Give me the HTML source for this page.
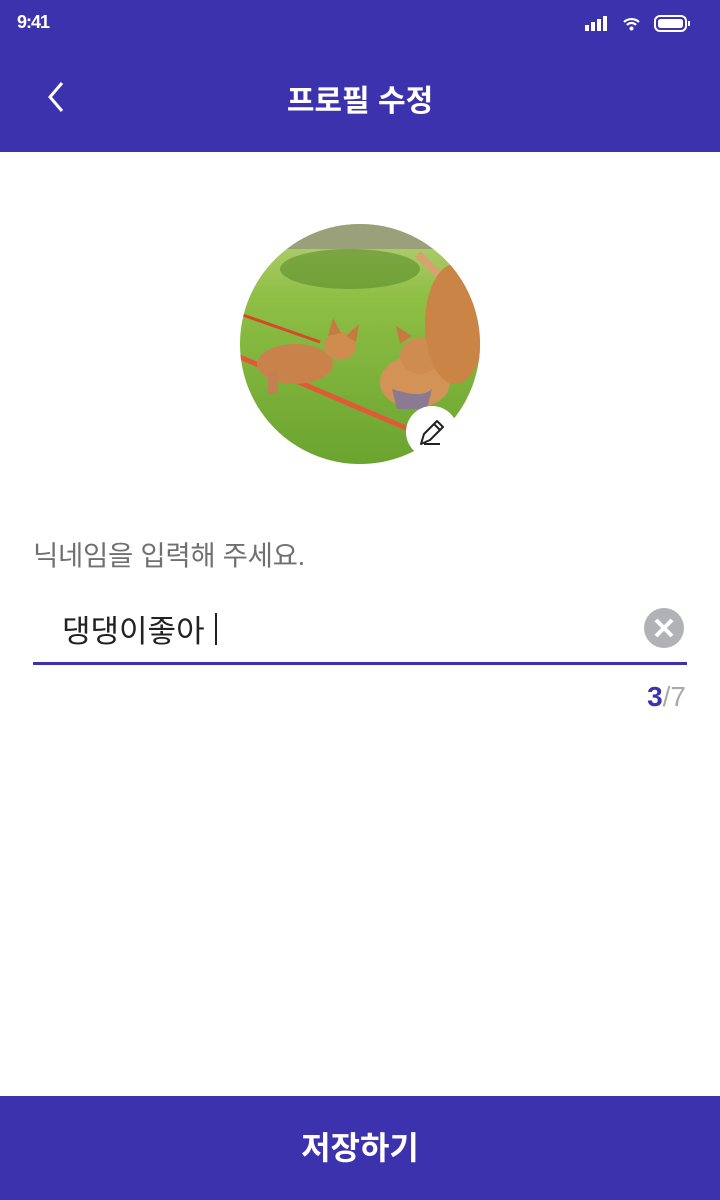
<!DOCTYPE html>
<html><head><meta charset="utf-8"><style>
*{margin:0;padding:0;box-sizing:border-box}
body{width:720px;height:1200px;background:#fff;position:relative;overflow:hidden;font-family:"Liberation Sans","Noto Sans CJK KR",sans-serif}
.hdr{position:absolute;left:0;top:0;width:720px;height:152px;background:#3d32ae;color:#fff}
.time{position:absolute;left:17px;top:12px;font-size:18px;font-weight:bold;letter-spacing:-1px}
.title{position:absolute;left:0;width:720px;top:76px;text-align:center;font-size:30px;font-weight:bold}
.lbl{position:absolute;left:33px;top:533px;font-size:27.5px;color:#707070;letter-spacing:-0.3px}
.inp{position:absolute;left:62px;top:606px;font-size:31px;color:#222}
.caret{position:absolute;left:215px;top:613px;width:2px;height:32px;background:#222}
.line{position:absolute;left:33px;top:662px;width:654px;height:3px;background:#3d32ae}
.cnt{position:absolute;right:34px;top:681px;font-size:28px;color:#aaa}
.cnt b{color:#3d32ae}
.btn{position:absolute;left:0;top:1096px;width:720px;height:104px;background:#3d32ae;color:#fff;text-align:center;font-size:32px;font-weight:bold;line-height:104px}
</style></head><body>
<div class="hdr">
<div class="time">9:41</div>
<svg style="position:absolute;left:584px;top:14px" width="110" height="20">
<rect x="1" y="11" width="4" height="6" fill="#fff"/><rect x="7" y="8" width="4" height="9" fill="#fff"/><rect x="13" y="5" width="4" height="12" fill="#fff"/><rect x="19" y="2" width="4" height="15" fill="#fff"/>
<path d="M40 8a11 11 0 0 1 15 0M43 11a6 6 0 0 1 9 0" stroke="#fff" stroke-width="2.2" fill="none"/><circle cx="47.5" cy="14.5" r="2" fill="#fff"/>
<rect x="71" y="2" width="31" height="15" rx="5" stroke="#fff" stroke-width="2" fill="none"/><rect x="74" y="5" width="25" height="9" rx="2.5" fill="#fff"/><rect x="104" y="7" width="2" height="5" fill="#fff"/>
</svg>
<svg style="position:absolute;left:44px;top:80px" width="24" height="34"><path d="M18 3L6 17l12 14" stroke="#fff" stroke-width="3" fill="none"/></svg>
<div class="title">프로필 수정</div>
</div>
<svg style="position:absolute;left:240px;top:224px" width="240" height="240" viewBox="0 0 240 240">
<defs><clipPath id="c"><circle cx="120" cy="120" r="120"/></clipPath>
<linearGradient id="g" x1="0" y1="0" x2="0" y2="1"><stop offset="0" stop-color="#b9d07a"/><stop offset="0.3" stop-color="#8fbf45"/><stop offset="1" stop-color="#6aa42f"/></linearGradient></defs>
<g clip-path="url(#c)">
<rect width="240" height="240" fill="url(#g)"/>
<rect x="40" y="0" width="160" height="25" fill="#9aa07a"/>
<ellipse cx="110" cy="45" rx="70" ry="20" fill="#5c8e2a" opacity="0.6"/>
<path d="M0 90L80 118" stroke="#d44a2a" stroke-width="3"/>
<path d="M0 133L180 210" stroke="#e05a35" stroke-width="5"/>
<ellipse cx="55" cy="140" rx="38" ry="20" fill="#c9834a"/>
<ellipse cx="100" cy="122" rx="16" ry="14" fill="#cf8c4f"/>
<path d="M88 112l5-18 8 15zM106 112l13-12-3 18z" fill="#c67a40"/>
<rect x="28" y="148" width="10" height="22" fill="#c38050"/>
<ellipse cx="175" cy="158" rx="35" ry="26" fill="#d39357"/>
<ellipse cx="180" cy="132" rx="20" ry="18" fill="#cf8c50"/>
<path d="M160 120l-4-18 16 10zM185 115l6-16 6 16z" fill="#c67a40"/>
<path d="M152 165q30 10 40 0l-5 20h-30z" fill="#8a7a92"/>
<ellipse cx="215" cy="100" rx="30" ry="60" fill="#c98446"/>
<path d="M178 30l20 20" stroke="#d9a070" stroke-width="8"/>
</g>
<circle cx="192" cy="208" r="26" fill="#fff"/>
<path d="M181 220l3-10 13-13 6 6-13 13zM184 220h16M194 200l6 6" stroke="#222" stroke-width="2" fill="none" stroke-linejoin="round"/>
</svg>
<div class="lbl">닉네임을 입력해 주세요.</div>
<div class="inp">댕댕이좋아</div>
<div class="caret"></div>
<svg style="position:absolute;left:643px;top:607px" width="42" height="42"><circle cx="21" cy="21" r="20" fill="#b0b2b6"/><path d="M13 13l16 16M29 13l-16 16" stroke="#fff" stroke-width="4"/></svg>
<div class="line"></div>
<div class="cnt"><b>3</b>/7</div>
<div class="btn">저장하기</div>
</body></html>
